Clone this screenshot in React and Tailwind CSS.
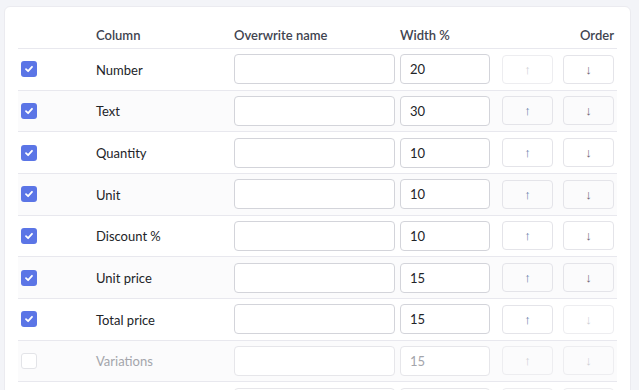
const rows = [
  { name: 'Number', width: '20', checked: true },
  { name: 'Text', width: '30', checked: true },
  { name: 'Quantity', width: '10', checked: true },
  { name: 'Unit', width: '10', checked: true },
  { name: 'Discount %', width: '10', checked: true },
  { name: 'Unit price', width: '15', checked: true },
  { name: 'Total price', width: '15', checked: true },
  { name: 'Variations', width: '15', checked: false },
  { name: 'Weight', width: '10', checked: false },
]

function Checkbox({ checked }) {
  if (!checked) {
    return <div className="w-4 h-4 rounded-[3px] border border-[#e3e4e8] bg-white" />
  }
  return (
    <div className="w-4 h-4 rounded-[3px] bg-[#5b75e6] flex items-center justify-center">
      <svg width="10" height="10" viewBox="0 0 10 10">
        <path d="M2 5.2 L4.1 7.2 L8 2.8" fill="none" stroke="white" strokeWidth="1.8" strokeLinecap="round" strokeLinejoin="round" />
      </svg>
    </div>
  )
}

function OrderButton({ down, enabled }) {
  const color = enabled ? (down ? 'text-[#6f6876]' : 'text-[#5f7ea8]') : 'text-[#cdd0d5]'
  return (
    <button
      className={
        'w-[51px] h-[29px] rounded-[4px] border flex items-center justify-center text-[13px] ' +
        (enabled ? 'border-[#e4e4e9] ' : 'border-[#ededf0] ') + color
      }
      style={{ fontFamily: '"Liberation Sans", "DejaVu Sans", sans-serif' }}
    >
      {down ? '↓' : '↑'}
    </button>
  )
}

export default function App() {
  const lastEnabled = rows.filter(r => r.checked).length - 1

  return (
    <div
      className="min-h-screen bg-[#f3f4f8] pt-[6px] pl-[4px] pr-[8px] text-[13px]"
      style={{ fontFamily: 'Lato, "Noto Sans", sans-serif' }}
    >
      <div className="bg-white border border-[#ebebf0] rounded-[6px] px-[13px] pt-[14px] pb-6">
        {/* Header */}
        <div className="flex items-end h-[28px] pb-[3px] border-b border-[#e8e8ee] font-semibold text-[#3f4450]">
          <div className="w-[78px] shrink-0" />
          <div className="w-[138px] shrink-0">Column</div>
          <div className="w-[166px] shrink-0">Overwrite name</div>
          <div className="w-[102px] shrink-0">Width %</div>
          <div className="flex-1 text-right pr-[3px]">Order</div>
        </div>

        {/* Rows */}
        {rows.map((row, i) => {
          const enabled = row.checked
          return (
            <div
              key={row.name}
              className={
                'flex items-center h-[41.67px] border-b border-[#e8e8ee] ' +
                (i % 2 === 1 ? 'bg-[#fbfbfc]' : 'bg-white')
              }
            >
              <div className="w-[78px] shrink-0 pl-[3px]">
                <Checkbox checked={row.checked} />
              </div>
              <div className={'w-[138px] shrink-0 pt-[2px] ' + (enabled ? 'text-[#222428]' : 'text-[#a3a5ab]')}>
                {row.name}
              </div>
              <input
                className={
                  'w-[161px] h-[30px] shrink-0 rounded-[4px] border bg-white px-[10px] ' +
                  (enabled ? 'border-[#d3d4da]' : 'border-[#e6e6ea]')
                }
                defaultValue=""
              />
              <input
                className={
                  'ml-[5px] w-[90px] h-[30px] shrink-0 rounded-[4px] border bg-white px-[9px] ' +
                  (enabled ? 'border-[#d3d4da] text-[#222428]' : 'border-[#e6e6ea] text-[#a3a5ab]')
                }
                defaultValue={row.width}
              />
              <div className="ml-[12px]">
                <OrderButton enabled={enabled && i > 0} />
              </div>
              <div className="ml-[10px]">
                <OrderButton down enabled={enabled && i < lastEnabled} />
              </div>
            </div>
          )
        })}
      </div>
    </div>
  )
}
